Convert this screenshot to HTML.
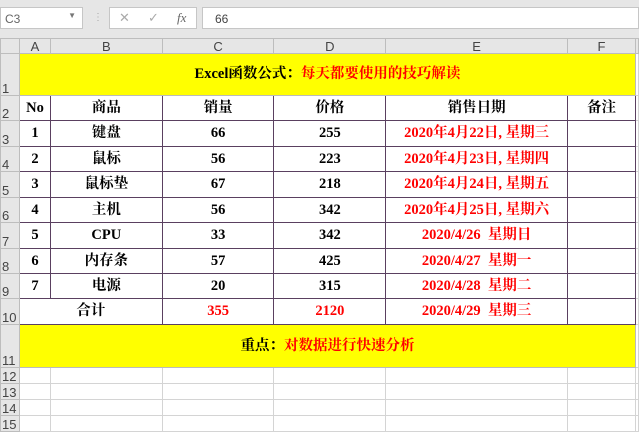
<!DOCTYPE html>
<html><head><meta charset="utf-8"><style>
*{margin:0;padding:0;box-sizing:border-box}
body{width:639px;height:431px;overflow:hidden;background:#fff;font-family:"Liberation Serif","Noto Serif CJK SC",serif;position:relative}
.top{position:absolute;left:0;top:0;width:639px;height:38px;background:#e6e6e6}
.nb{position:absolute;left:0;top:7px;width:83px;height:22px;background:#fff;border:1px solid #c6c6c6;font:12px "Liberation Sans",sans-serif;color:#666;padding:4px 4px}
.fxb{position:absolute;left:109px;top:7px;width:88px;height:22px;background:#fff;border:1px solid #c6c6c6;color:#aaa;font:13px "Liberation Sans",sans-serif}
.fin{position:absolute;left:202px;top:7px;width:437px;height:22px;background:#fff;border:1px solid #c6c6c6;font:12px "Liberation Sans",sans-serif;color:#444;padding:4px 12px}
table{position:absolute;left:0;top:38px;border-collapse:collapse;table-layout:fixed}
td{border:1px solid #d4d4d4;text-align:center;font-weight:bold;font-size:14.5px;line-height:1;padding:0;overflow:hidden;white-space:nowrap}
td.h{background:#e6e6e6;color:#444;font:13px/1 "Liberation Sans",sans-serif;border-color:#bdbdbd;vertical-align:bottom;text-align:left;padding-left:1px}
tr.ch td{background:#e6e6e6;color:#444;font:13px/1 "Liberation Sans",sans-serif;border-color:#bdbdbd;vertical-align:middle}
.d td.x{border:1px solid #5a4060}
.r{color:#f00}
.y{background:#ff0}
</style></head><body>
<div class="top"></div>
<div class="nb">C3<span style="position:absolute;right:6px;top:3px;font-size:8px;color:#777">▼</span></div>
<div style="position:absolute;left:93px;top:12px;color:#aaa;font-size:10px">⋮</div>
<div class="fxb"><span style="position:absolute;left:9px;top:2px">✕</span><span style="position:absolute;left:38px;top:2px">✓</span><span style="position:absolute;left:67px;top:2px;font-style:italic;font-family:'Liberation Serif',serif;color:#666">fx</span></div>
<div class="fin">66</div>
<table>
<colgroup><col style="width:19px"><col style="width:31px"><col style="width:112px"><col style="width:112px"><col style="width:112px"><col style="width:182px"><col style="width:68px"><col style="width:3px"></colgroup>
<tr class="ch" style="height:15px"><td style="background:#e6e6e6"></td><td>A</td><td>B</td><td>C</td><td>D</td><td>E</td><td>F</td><td></td></tr>
<tr style="height:42px"><td class="h">1</td><td class="y" colspan="6" style="border:1px solid #bbb">Excel函数公式：<span class="r">每天都要使用的技巧解读</span></td><td></td></tr>
<tr class="d" style="height:25px"><td class="h">2</td><td class="x">No</td><td class="x">商品</td><td class="x">销量</td><td class="x">价格</td><td class="x">销售日期</td><td class="x">备注</td><td></td></tr>
<tr class="d" style="height:26px"><td class="h">3</td><td class="x">1</td><td class="x">键盘</td><td class="x">66</td><td class="x">255</td><td class="x r">2020年4月22日, 星期三</td><td class="x"></td><td></td></tr>
<tr class="d" style="height:25px"><td class="h">4</td><td class="x">2</td><td class="x">鼠标</td><td class="x">56</td><td class="x">223</td><td class="x r">2020年4月23日, 星期四</td><td class="x"></td><td></td></tr>
<tr class="d" style="height:26px"><td class="h">5</td><td class="x">3</td><td class="x">鼠标垫</td><td class="x">67</td><td class="x">218</td><td class="x r">2020年4月24日, 星期五</td><td class="x"></td><td></td></tr>
<tr class="d" style="height:25px"><td class="h">6</td><td class="x">4</td><td class="x">主机</td><td class="x">56</td><td class="x">342</td><td class="x r">2020年4月25日, 星期六</td><td class="x"></td><td></td></tr>
<tr class="d" style="height:26px"><td class="h">7</td><td class="x">5</td><td class="x">CPU</td><td class="x">33</td><td class="x">342</td><td class="x r">2020/4/26&nbsp; 星期日</td><td class="x"></td><td></td></tr>
<tr class="d" style="height:25px"><td class="h">8</td><td class="x">6</td><td class="x">内存条</td><td class="x">57</td><td class="x">425</td><td class="x r">2020/4/27&nbsp; 星期一</td><td class="x"></td><td></td></tr>
<tr class="d" style="height:25px"><td class="h">9</td><td class="x">7</td><td class="x">电源</td><td class="x">20</td><td class="x">315</td><td class="x r">2020/4/28&nbsp; 星期二</td><td class="x"></td><td></td></tr>
<tr class="d" style="height:26px"><td class="h">10</td><td class="x" colspan="2">合计</td><td class="x r">355</td><td class="x r">2120</td><td class="x r">2020/4/29&nbsp; 星期三</td><td class="x"></td><td></td></tr>
<tr style="height:43px"><td class="h">11</td><td class="y" colspan="6" style="border:1px solid #bbb">重点：<span class="r">对数据进行快速分析</span></td><td></td></tr>
<tr style="height:16px"><td class="h">12</td><td></td><td></td><td></td><td></td><td></td><td></td><td></td></tr>
<tr style="height:16px"><td class="h">13</td><td></td><td></td><td></td><td></td><td></td><td></td><td></td></tr>
<tr style="height:16px"><td class="h">14</td><td></td><td></td><td></td><td></td><td></td><td></td><td></td></tr>
<tr style="height:16px"><td class="h">15</td><td></td><td></td><td></td><td></td><td></td><td></td><td></td></tr>
</table>
</body></html>
